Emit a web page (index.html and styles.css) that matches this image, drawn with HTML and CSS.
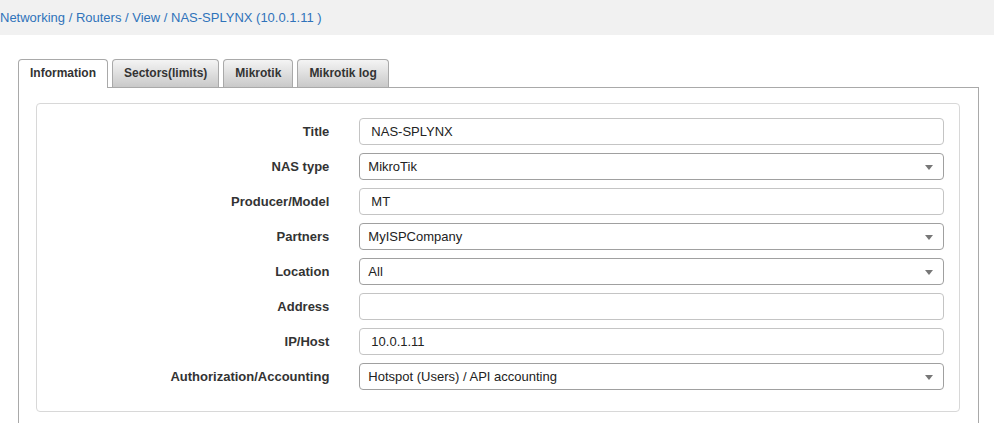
FILE: index.html
```html
<!DOCTYPE html>
<html>
<head>
<meta charset="utf-8">
<link rel="stylesheet" href="styles.css">
</head>
<body>
<div class="crumbs"><a href="#">Networking</a> / <a href="#">Routers</a> / <a href="#">View</a> / <a href="#">NAS-SPLYNX (10.0.1.11 )</a></div>
<div class="content">
  <ul class="tabs">
    <li class="tab active">Information</li>
    <li class="tab">Sectors(limits)</li>
    <li class="tab">Mikrotik</li>
    <li class="tab">Mikrotik log</li>
  </ul>
  <div class="panel">
    <div class="box">
      <div class="row"><label>Title</label><div class="field"><div class="input">NAS-SPLYNX</div></div></div>
      <div class="row"><label>NAS type</label><div class="field"><div class="select">MikroTik<span class="caret"></span></div></div></div>
      <div class="row"><label>Producer/Model</label><div class="field"><div class="input">MT</div></div></div>
      <div class="row"><label>Partners</label><div class="field"><div class="select">MyISPCompany<span class="caret"></span></div></div></div>
      <div class="row"><label>Location</label><div class="field"><div class="select">All<span class="caret"></span></div></div></div>
      <div class="row"><label>Address</label><div class="field"><div class="input"></div></div></div>
      <div class="row"><label>IP/Host</label><div class="field"><div class="input">10.0.1.11</div></div></div>
      <div class="row"><label>Authorization/Accounting</label><div class="field"><div class="select">Hotspot (Users) / API accounting<span class="caret"></span></div></div></div>
    </div>
  </div>
</div>
</body>
</html>
```
FILE: styles.css
```css
html, body {
  margin: 0;
  padding: 0;
  background: #fff;
  font-family: "Liberation Sans", Arial, sans-serif;
  color: #333;
}
.crumbs {
  height: 35px;
  line-height: 35px;
  background: #f1f1f1;
  font-size: 13px;
  color: #2f73ba;
  white-space: nowrap;
}
.crumbs a {
  color: #2f73ba;
  text-decoration: none;
}
.content {
  padding: 24px 15px 0 18px;
}
.tabs {
  display: flex;
  gap: 4px;
  list-style: none;
  margin: 0 0 -1px 0;
  padding: 0;
  position: relative;
  z-index: 1;
}
.tab {
  height: 27px;
  line-height: 27px;
  padding: 0 11px;
  font-size: 12px;
  font-weight: bold;
  color: #333;
  border: 1px solid #a9a9a9;
  border-bottom: none;
  border-radius: 4px 4px 0 0;
  background: linear-gradient(#f4f4f4, #c9c9c9);
}
.tab.active {
  background: #fff;
  height: 28px;
  border-bottom: none;
}
.panel {
  border: 1px solid #a9a9a9;
  border-bottom: none;
  padding: 15px 18px 30px 17px;
}
.box {
  border: 1px solid #d8d8d8;
  border-radius: 4px;
  padding: 14px 0 21px 0;
  display: flex;
  flex-direction: column;
  gap: 8px;
}
.row {
  display: grid;
  grid-template-columns: 1fr 2fr;
  align-items: center;
}
.row label {
  padding: 0 15px;
  text-align: right;
  font-size: 13px;
  font-weight: bold;
  color: #333;
}
.field {
  padding: 0 15px;
}
.input, .select {
  position: relative;
  height: 25px;
  line-height: 25px;
  border: 1px solid #c4c4c4;
  border-radius: 4px;
  font-size: 13px;
  color: #222;
  padding: 0 11px;
}
.select {
  border-color: #a0a0a0;
  padding-left: 8px;
}
.caret {
  position: absolute;
  right: 10px;
  top: 11px;
  width: 0;
  height: 0;
  border-left: 4px solid transparent;
  border-right: 4px solid transparent;
  border-top: 5px solid #777;
}
```
